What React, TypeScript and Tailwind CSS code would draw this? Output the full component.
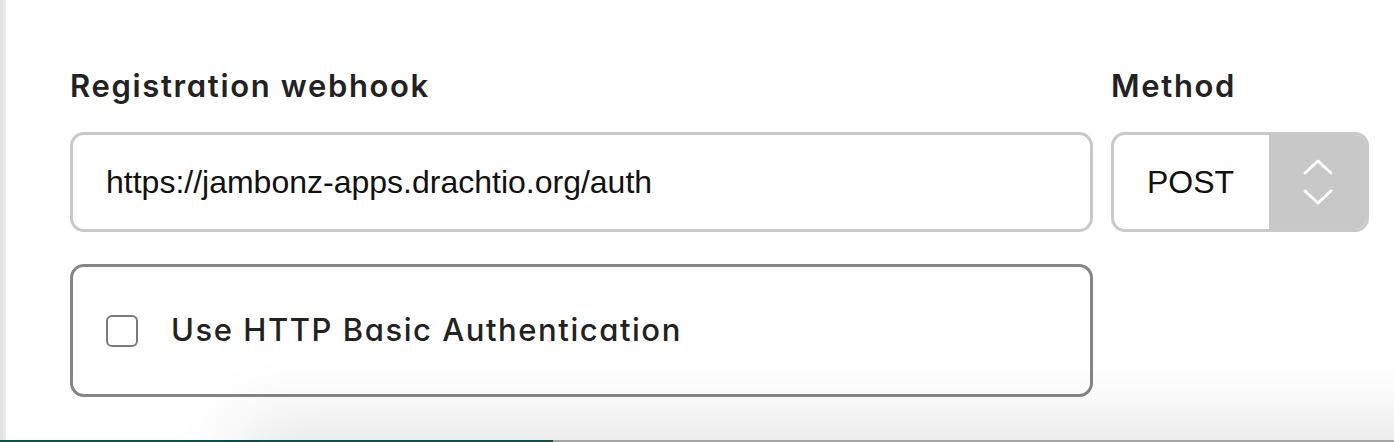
import React from "react";

export default function App() {
  return (
    <div className="relative w-[1394px] h-[442px] overflow-hidden bg-white flex flex-col">
      <div className="flex flex-1 min-h-0">
        <div className="w-[6px] bg-gradient-to-r from-[#dedede] to-[#efefef]" />
        <div className="flex-1 pl-[64px] pr-[25px] pt-[66px]">
          <div className="grid grid-cols-[1023px_258px] gap-x-[18px]">
            <label className="h-[40px] leading-[40px] text-[31px] font-semibold text-[#222] [font-family:Inter,sans-serif] [font-feature-settings:'cv11'] tracking-[1.65px]">
              Registration webhook
            </label>
            <label className="h-[40px] leading-[40px] text-[31px] font-semibold text-[#222] [font-family:Inter,sans-serif] [font-feature-settings:'cv11'] tracking-[1.65px]">
              Method
            </label>
            <div className="mt-[26px] h-[100px] rounded-[14px] border-[3px] border-[#c9c9c9] flex items-center pl-[33px] text-[32px] text-[#111] [font-family:'Liberation_Sans',Arial,sans-serif]">
              https://jambonz-apps.drachtio.org/auth
            </div>
            <div className="mt-[26px] h-[100px] rounded-[14px] border-[3px] border-[#c9c9c9] flex overflow-hidden">
              <div className="flex-1 flex items-center pl-[33px] text-[32px] text-[#111] [font-family:'Liberation_Sans',Arial,sans-serif]">
                POST
              </div>
              <div className="w-[97px] bg-[#c8c8c8] flex items-center justify-center">
                <svg width="32" height="50" viewBox="0 0 32 50" fill="none" stroke="white" strokeWidth="3" strokeLinecap="round" strokeLinejoin="round">
                  <path d="M3 16 L16 4 L29 16" />
                  <path d="M3 34 L16 46 L29 34" />
                </svg>
              </div>
            </div>
            <div className="mt-[32px] h-[133px] rounded-[14px] border-[3px] border-[#858585] flex items-center pl-[33px]">
              <div className="w-[32px] h-[32px] rounded-[6px] border-2 border-[#7a7a7a] bg-white" />
              <span className="ml-[33px] text-[31px] font-medium text-[#222] [font-family:Inter,sans-serif] [font-feature-settings:'cv11'] tracking-[1.55px]">
                Use HTTP Basic Authentication
              </span>
            </div>
          </div>
        </div>
      </div>
      <div className="h-[2px] flex shrink-0">
        <div className="w-[553px] bg-[#0b5249]" />
        <div className="flex-1 bg-[#a3a3a3]" />
      </div>
      <div className="pointer-events-none absolute left-[260px] right-[-100px] top-[440px] h-[60px] shadow-[0_0_70px_20px_rgba(0,0,0,0.10)]" />
    </div>
  );
}
